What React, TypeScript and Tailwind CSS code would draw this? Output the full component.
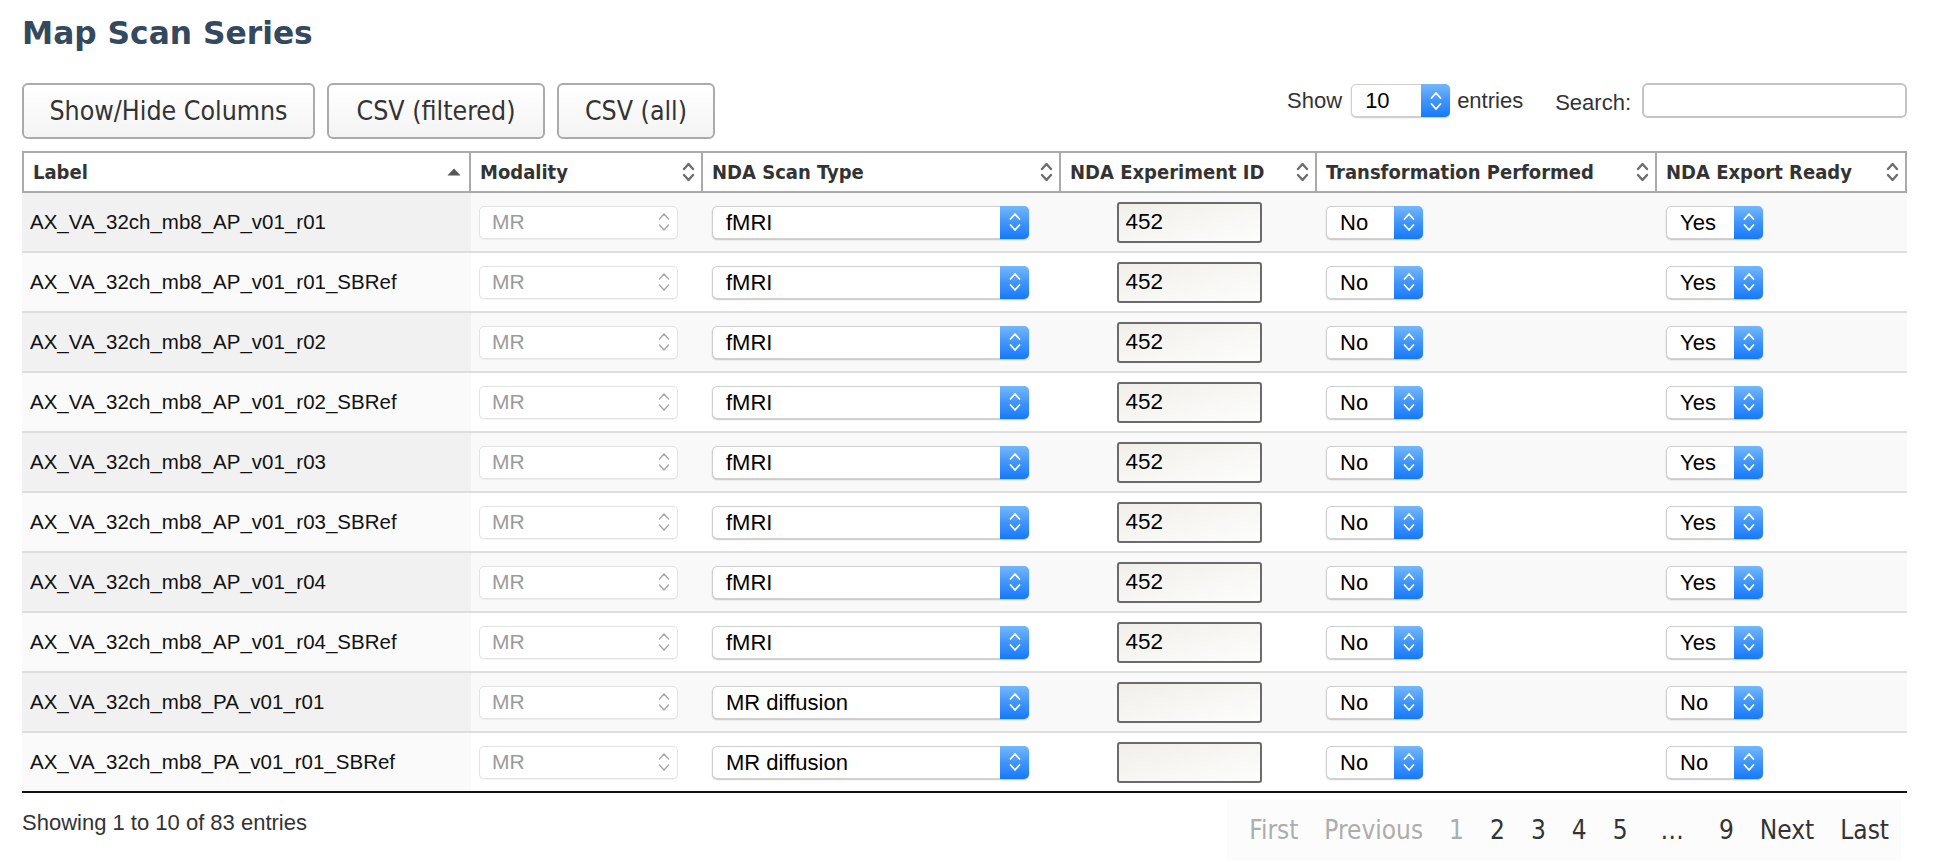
import React from 'react';

const cond = "font-['DejaVu_Sans_Condensed','DejaVu_Sans',sans-serif] [font-stretch:condensed]";
const helv = "font-['Liberation_Sans',Arial,sans-serif]";

function Chevrons({ color, w = 13, h = 21, sw = 2 }: { color: string; w?: number; h?: number; sw?: number }) {
  return (
    <svg width={w} height={h} viewBox="0 0 14 22" fill="none" stroke={color} strokeWidth={sw} strokeLinecap="round" strokeLinejoin="round">
      <path d="M2.5 8 L7 3 L11.5 8" />
      <path d="M2.5 14 L7 19 L11.5 14" />
    </svg>
  );
}

function Sel({ value, width, disabled }: { value: string; width: string; disabled?: boolean }) {
  if (disabled) {
    return (
      <div className={`flex h-[33px] items-center rounded-[5px] border border-[#e3e3e3] bg-white shadow-[0_1px_1px_rgba(0,0,0,0.05)] ${width}`}>
        <span className={`flex-1 pl-[12px] text-[21px] text-[#9b9b9b] ${helv}`}>{value}</span>
        <span className="flex pr-[6px]">
          <Chevrons color="#aaaaaa" w={14} h={22} sw={1.5} />
        </span>
      </div>
    );
  }
  return (
    <div className={`flex h-[33px] items-stretch rounded-[5px] border border-[#cfcfcf] bg-white shadow-[0_1px_1.5px_rgba(0,0,0,0.22)] ${width}`}>
      <span className={`flex flex-1 items-center pl-[13px] text-[22px] text-black ${helv}`}>{value}</span>
      <span className="-my-px -mr-px flex w-[29px] items-center justify-center rounded-r-[5px] bg-linear-to-b from-[#74b7fb] via-[#3f95fa] to-[#1479fa]">
        <Chevrons color="#ffffff" w={14} h={22} sw={1.8} />
      </span>
    </div>
  );
}

function SortIcon() {
  return <Chevrons color="#6e6e6e" w={15} h={22} sw={2.4} />;
}

function SortAsc() {
  return (
    <svg width="14" height="8" viewBox="0 0 14 8">
      <path d="M7 0.5 L13.5 7.5 L0.5 7.5 Z" fill="#555555" />
    </svg>
  );
}

type Row = { label: string; type: string; id: string; t: string; e: string };

const rows: Row[] = [
  { label: 'AX_VA_32ch_mb8_AP_v01_r01', type: 'fMRI', id: '452', t: 'No', e: 'Yes' },
  { label: 'AX_VA_32ch_mb8_AP_v01_r01_SBRef', type: 'fMRI', id: '452', t: 'No', e: 'Yes' },
  { label: 'AX_VA_32ch_mb8_AP_v01_r02', type: 'fMRI', id: '452', t: 'No', e: 'Yes' },
  { label: 'AX_VA_32ch_mb8_AP_v01_r02_SBRef', type: 'fMRI', id: '452', t: 'No', e: 'Yes' },
  { label: 'AX_VA_32ch_mb8_AP_v01_r03', type: 'fMRI', id: '452', t: 'No', e: 'Yes' },
  { label: 'AX_VA_32ch_mb8_AP_v01_r03_SBRef', type: 'fMRI', id: '452', t: 'No', e: 'Yes' },
  { label: 'AX_VA_32ch_mb8_AP_v01_r04', type: 'fMRI', id: '452', t: 'No', e: 'Yes' },
  { label: 'AX_VA_32ch_mb8_AP_v01_r04_SBRef', type: 'fMRI', id: '452', t: 'No', e: 'Yes' },
  { label: 'AX_VA_32ch_mb8_PA_v01_r01', type: 'MR diffusion', id: '', t: 'No', e: 'No' },
  { label: 'AX_VA_32ch_mb8_PA_v01_r01_SBRef', type: 'MR diffusion', id: '', t: 'No', e: 'No' },
];

const headers = [
  { name: 'Label', w: 'w-[449px] border-l-2', asc: true },
  { name: 'Modality', w: 'w-[232px]' },
  { name: 'NDA Scan Type', w: 'w-[358px]' },
  { name: 'NDA Experiment ID', w: 'w-[256px]' },
  { name: 'Transformation Performed', w: 'w-[340px]' },
  { name: 'NDA Export Ready', w: 'w-[250px]' },
];

function Btn({ children, w }: { children: React.ReactNode; w: string }) {
  return (
    <div className={`flex h-[56px] items-center justify-center rounded-[6px] border-2 border-[#ababab] bg-linear-to-b from-white to-[#f4f4f4] text-[26.5px] text-[#333] ${cond} ${w}`}>
      {children}
    </div>
  );
}

function PageBtn({ children, disabled, className = '' }: { children: React.ReactNode; disabled?: boolean; className?: string }) {
  return (
    <span className={`ml-[2px] px-[12px] pt-[16px] pb-[16px] text-[26px] leading-[30px] ${cond} ${disabled ? 'text-[#adadad]' : 'text-[#333]'} ${className}`}>
      {children}
    </span>
  );
}

export default function App() {
  return (
    <div className="h-[862px] w-[1940px] overflow-hidden bg-white">
      <div className="pl-[22px] pr-[33px] pt-[17px]">
        <h1 className="h-[32px] font-['DejaVu_Sans',sans-serif] text-[31.3px] font-bold leading-[32px] text-[#34495e]">Map Scan Series</h1>

        <div className="mt-[34px] flex items-start justify-between">
          <div className="flex gap-[12px]">
            <Btn w="w-[293px]">Show/Hide Columns</Btn>
            <Btn w="w-[218px]">CSV (filtered)</Btn>
            <Btn w="w-[158px]">CSV (all)</Btn>
          </div>
          <div className={`flex h-[35px] items-center text-[22px] text-[#333] ${helv}`}>
            <span>Show</span>
            <div className="ml-[9px]">
              <Sel value="10" width="w-[99px]" />
            </div>
            <span className="ml-[7px]">entries</span>
            <span className="ml-[32px] mt-[3px]">Search:</span>
            <div className="ml-[11px] h-[35px] w-[265px] rounded-[6px] border-2 border-[#c4c4c4] bg-white" />
          </div>
        </div>

        <div className="mt-[12px]">
          <div className="flex h-[42px] border-y-2 border-[#aaaaaa] bg-white">
            {headers.map((h) => (
              <div
                key={h.name}
                className={`flex items-center justify-between border-r-2 border-[#aaaaaa] pl-[9px] text-[20px] font-bold text-[#333] ${cond} ${h.w} ${h.asc ? 'pr-[8px]' : 'pr-[5px]'}`}
              >
                <span>{h.name}</span>
                {h.asc ? <SortAsc /> : <SortIcon />}
              </div>
            ))}
          </div>
          {rows.map((r, i) => {
            const odd = i % 2 === 0;
            const last = i === rows.length - 1;
            return (
              <div
                key={i}
                className={`flex h-[60px] ${last ? 'border-b-2 border-[#111]' : 'border-b-2 border-[#dedede]'} ${odd ? 'bg-[#f9f9f9]' : 'bg-white'}`}
              >
                <div className={`flex w-[449px] items-center pl-[8px] text-[20.5px] text-[#111] ${helv} ${odd ? 'bg-[#f1f1f1]' : 'bg-[#fafafa]'}`}>
                  {r.label}
                </div>
                <div className="flex w-[232px] items-center pl-[8px]">
                  <Sel value="MR" width="w-[199px]" disabled />
                </div>
                <div className="flex w-[358px] items-center pl-[9px]">
                  <Sel value={r.type} width="w-[317px]" />
                </div>
                <div className="flex w-[256px] items-center justify-center">
                  <div className={`flex h-[41px] w-[145px] items-center rounded-[3px] border-2 border-[#6b6b6b] bg-linear-to-br from-[#f0efea] to-[#fdfdfc] pl-[7px] text-[22.5px] text-black ${helv}`}>
                    {r.id}
                  </div>
                </div>
                <div className="flex w-[340px] items-center pl-[9px]">
                  <Sel value={r.t} width="w-[97px]" />
                </div>
                <div className="flex w-[250px] items-center pl-[9px]">
                  <Sel value={r.e} width="w-[97px]" />
                </div>
              </div>
            );
          })}
        </div>

        <div className="flex items-start justify-between">
          <div className={`mt-[13px] text-[22px] leading-[33px] text-[#333] ${helv}`}>Showing 1 to 10 of 83 entries</div>
          <div className="mr-[6px] mt-[6px] flex bg-[#fcfcfc] pl-[8px]">
            <PageBtn disabled>First</PageBtn>
            <PageBtn disabled>Previous</PageBtn>
            <PageBtn disabled>1</PageBtn>
            <PageBtn>2</PageBtn>
            <PageBtn>3</PageBtn>
            <PageBtn>4</PageBtn>
            <PageBtn>5</PageBtn>
            <span className={`px-[21px] pt-[16px] pb-[16px] text-[26px] leading-[30px] text-[#333] ${cond}`}>…</span>
            <PageBtn>9</PageBtn>
            <PageBtn>Next</PageBtn>
            <PageBtn>Last</PageBtn>
          </div>
        </div>
      </div>
    </div>
  );
}
